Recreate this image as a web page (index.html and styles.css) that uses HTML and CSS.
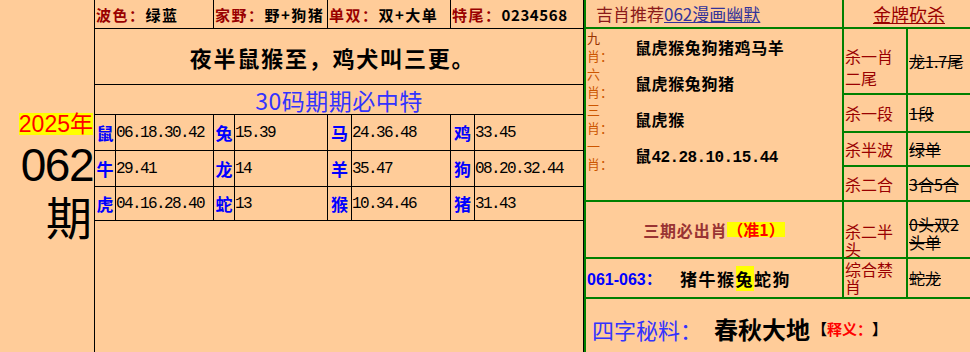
FILE: index.html
```html
<!DOCTYPE html>
<html lang="zh-CN">
<head>
<meta charset="utf-8">
<title>2025年062期</title>
<link rel="stylesheet" href="styles.css">
</head>
<body>
<div class="page">
  <div class="issue">
    <span class="year">2025年</span>
    <span class="num">062</span>
    <span class="qi">期</span>
  </div>

  <div class="mid">
    <div class="attrs">
      <div class="attr"><span class="k">波色：</span><span class="v">绿蓝</span></div>
      <div class="attr"><span class="k">家野：</span><span class="v">野+狗猪</span></div>
      <div class="attr"><span class="k">单双：</span><span class="v">双+大单</span></div>
      <div class="attr"><span class="k">特尾：</span><span class="v digits">0234568</span></div>
    </div>
    <div class="motto">夜半鼠猴至，鸡犬叫三更。</div>
    <div class="title">30码期期必中特</div>
    <div class="codes">
      <span class="z">鼠</span><span class="n">06.18.30.42</span>
      <span class="z">兔</span><span class="n">15.39</span>
      <span class="z">马</span><span class="n">24.36.48</span>
      <span class="z">鸡</span><span class="n">33.45</span>
      <span class="z">牛</span><span class="n">29.41</span>
      <span class="z">龙</span><span class="n">14</span>
      <span class="z">羊</span><span class="n">35.47</span>
      <span class="z">狗</span><span class="n">08.20.32.44</span>
      <span class="z">虎</span><span class="n">04.16.28.40</span>
      <span class="z">蛇</span><span class="n">13</span>
      <span class="z">猴</span><span class="n">10.34.46</span>
      <span class="z">猪</span><span class="n">31.43</span>
    </div>
    <div class="filler"></div>
  </div>

  <div class="right">
    <div class="rec-head">吉肖推荐<a class="rec-link" href="#">062漫画幽默</a></div>
    <div class="kill-head"><a class="kill-link" href="#">金牌砍杀</a></div>

    <div class="picks">
      <div class="pick"><span class="pl"><span class="pl-a pl1">九</span><span class="pl-b">肖：</span></span><span class="pv">鼠虎猴兔狗猪鸡马羊</span></div>
      <div class="pick"><span class="pl"><span class="pl-a">六</span><span class="pl-b">肖：</span></span><span class="pv">鼠虎猴兔狗猪</span></div>
      <div class="pick"><span class="pl"><span class="pl-a">三</span><span class="pl-b">肖：</span></span><span class="pv">鼠虎猴</span></div>
      <div class="pick"><span class="pl"><span class="pl-a">一</span><span class="pl-b">肖：</span></span><span class="pv">鼠<span class="pn">42.28.10.15.44</span></span></div>
    </div>

    <div class="kl kl-a">杀一肖二尾</div>
    <div class="kv kv-a">龙1.7尾</div>
    <div class="kl kl-b">杀一段</div>
    <div class="kv kv-b">1段</div>
    <div class="kl kl-c">杀半波</div>
    <div class="kv kv-c">绿单</div>
    <div class="kl kl-d">杀二合</div>
    <div class="kv kv-d">3合5合</div>

    <div class="must"><span class="must-t">三期必出肖</span><span class="must-h">（准1）</span></div>
    <div class="kl kl-e">杀二半头</div>
    <div class="kv kv-e">0头双2头单</div>

    <div class="span3"><span class="sp-k">061-063：</span><span class="sp-v">猪牛猴<span class="hl">兔</span>蛇狗</span></div>
    <div class="kl kl-f">综合禁肖</div>
    <div class="kv kv-f">蛇龙</div>

    <div class="secret"><span class="se-k">四字秘料：</span><span class="se-v">春秋大地</span><span class="se-n">【<span class="se-r">释义：</span>】</span></div>
  </div>
</div>
</body>
</html>
```

FILE: styles.css
```css
* { box-sizing: border-box; }

body {
  margin: 0;
  background: #ffcc99;
  font-family: "Noto Sans CJK SC", sans-serif;
  color: #000;
  text-spacing-trim: space-all;
}

.page {
  display: flex;
  width: 970px;
  height: 352px;
  overflow: hidden;
  background: #ffcc99;
}

/* left issue column */
.issue {
  width: 94px;
  flex: none;
  display: flex;
  flex-direction: column;
  align-items: flex-end;
  padding: 113px 1px 0 0;
}
.year {
  background: #ffff00;
  color: #ff0000;
  font-family: "Liberation Sans", "Noto Sans CJK SC", sans-serif;
  font-size: 23px;
  line-height: 22px;
  white-space: nowrap;
}
.num {
  margin-top: 5px;
  font-family: "Liberation Sans", sans-serif;
  font-size: 46px;
  line-height: 50px;
  letter-spacing: -1.5px;
}
.qi {
  font-size: 46px;
  line-height: 50px;
  margin-right: 1px;
}

/* middle table */
.mid {
  width: 490px;
  flex: none;
  background: #000;
  padding: 0 1px;
  display: flex;
  flex-direction: column;
  gap: 1px;
}
.attrs {
  display: grid;
  grid-template-columns: 118px 113px 122px 132px;
  gap: 1px;
  height: 28px;
  background: #000;
}
.attr {
  background: #ffcc99;
  display: flex;
  align-items: center;
  padding-left: 1px;
  font-size: 15px;
  font-weight: bold;
  letter-spacing: 1.5px;
  white-space: nowrap;
}
.k { color: #990000; }
.v { color: #000; }
.digits { letter-spacing: 0.6px; }

.motto {
  height: 55px;
  flex: none;
  background: #ffcc99;
  display: flex;
  align-items: center;
  justify-content: center;
  padding-right: 13px;
  font-size: 22px;
  font-weight: bold;
  letter-spacing: 1.8px;
}
.title {
  height: 29px;
  flex: none;
  background: #ffcc99;
  display: flex;
  align-items: center;
  justify-content: center;
  color: #3333ff;
  font-size: 23px;
  letter-spacing: 0.5px;
}
.codes {
  display: grid;
  grid-template-columns: 20px 97px 20px 92px 23px 98px 23px 108px;
  grid-template-rows: 35px 35px 33px;
  gap: 1px;
  background: #000;
}
.codes > span {
  background: #ffcc99;
  display: flex;
  align-items: center;
}
.z {
  justify-content: center;
  color: #0000ff;
  font-weight: bold;
  font-size: 17px;
}
.n {
  font-family: "Liberation Mono", monospace;
  font-size: 16px;
  letter-spacing: -1.6px;
}
.filler {
  flex: 1;
  background: #ffcc99;
}

/* right green table */
.right {
  flex: none;
  width: 386px;
  background: #008000;
  padding-left: 2px;
  display: grid;
  grid-template-columns: 256px 62px 62px;
  grid-template-rows: 27px 64px 36px 32px 33px 55px 38px 53px;
  gap: 2px;
}
.right > div {
  background: #ffcc99;
}
.rec-head {
  grid-column: 1;
  grid-row: 1;
  display: flex;
  align-items: center;
  padding-left: 10px;
  font-size: 17px;
  color: #8b1a1a;
  white-space: nowrap;
}
.rec-link {
  color: #333399;
  text-decoration: underline;
}
.kill-head {
  grid-column: 2 / 4;
  grid-row: 1;
  display: flex;
  align-items: center;
  justify-content: center;
  padding-left: 4px;
  font-size: 18px;
}
.kill-link {
  color: #990000;
  text-decoration: underline;
}

.picks {
  grid-column: 1;
  grid-row: 2 / 6;
}
.pick {
  display: flex;
  align-items: center;
  height: 36px;
}
.pl {
  width: 20px;
  flex: none;
  display: flex;
  flex-direction: column;
  padding-left: 1px;
  font-size: 13px;
  color: #cc5500;
  white-space: nowrap;
}
.pl-a, .pl-b {
  display: block;
  height: 18px;
  line-height: 18px;
}
.pl1 { color: #993300; }
.pv {
  padding-left: 29px;
  font-size: 16px;
  font-weight: bold;
  letter-spacing: 0.6px;
  white-space: nowrap;
}
.pn {
  font-family: "Liberation Mono", monospace;
  letter-spacing: -0.6px;
}

.kl {
  grid-column: 2;
  display: flex;
  align-items: center;
  padding-left: 1px;
  font-size: 16px;
  line-height: 20px;
  color: #990000;
}
.kv {
  grid-column: 3;
  display: flex;
  align-items: center;
  padding-left: 1px;
  font-size: 16px;
  line-height: 18px;
  text-decoration: line-through;
}
.kl-a, .kv-a { grid-row: 2; }
.kl-a { padding-top: 12px; line-height: 22px; }
.kl-b, .kv-b { grid-row: 3; }
.kl-c, .kv-c { grid-row: 4; }
.kl-d, .kv-d { grid-row: 5; }
.kl-e, .kv-e { grid-row: 6; }
.kl-e { padding-top: 20px; line-height: 18px; }
.kv-e { padding-top: 6px; }
.kl-f, .kv-f { grid-row: 7; }
.kl-f { line-height: 17px; }

.must {
  grid-column: 1;
  grid-row: 6;
  display: flex;
  align-items: center;
  justify-content: center;
  font-size: 16px;
  font-weight: bold;
}
.must-t { color: #993333; letter-spacing: 0.8px; }
.must-h {
  display: inline-block;
  background: #ffff00;
  color: #ff0000;
  line-height: 15px;
}

.span3 {
  grid-column: 1;
  grid-row: 7;
  display: flex;
  align-items: center;
  padding-left: 1px;
  white-space: nowrap;
}
.sp-k {
  color: #0000ff;
  font-family: "Liberation Sans", "Noto Sans CJK SC", sans-serif;
  font-weight: bold;
  font-size: 16px;
  width: 93px;
}
.sp-v {
  font-size: 17px;
  font-weight: bold;
  letter-spacing: 1.5px;
}
.hl { background: #ffff00; }

.secret {
  grid-column: 1 / 4;
  grid-row: 8;
  display: flex;
  align-items: center;
  padding: 6px 0 0 6px;
  white-space: nowrap;
}
.se-k {
  color: #3333ff;
  font-size: 22px;
}
.se-v {
  margin-left: 12px;
  font-size: 24px;
  font-weight: bold;
}
.se-n {
  margin-left: 2px;
  font-size: 15px;
  font-weight: bold;
}
.se-r { color: #ff0000; }
```
